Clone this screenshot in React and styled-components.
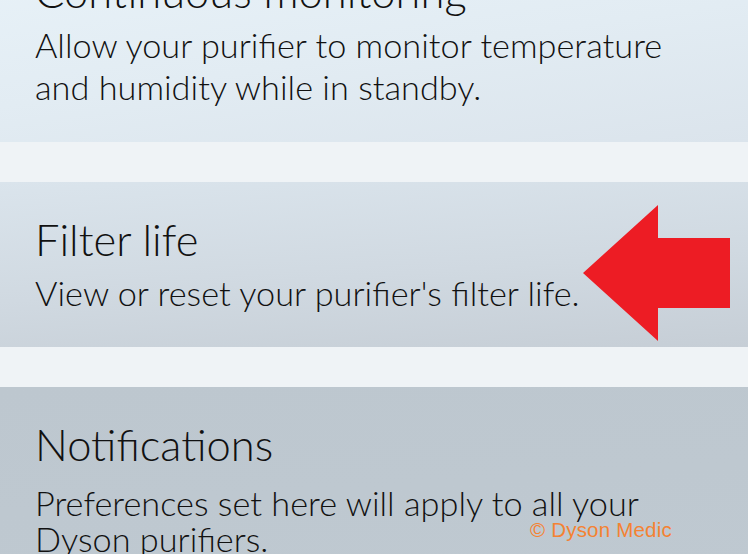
import React from "react";
import styled, { createGlobalStyle } from "styled-components";

const GlobalStyle = createGlobalStyle`
  html, body {
    margin: 0;
    height: 100%;
    overflow: hidden;
    background: #eff3f6;
  }
  body {
    font-family: "Lato", "Noto Sans", sans-serif;
    color: #111;
    -webkit-font-smoothing: antialiased;
  }
`;

const tones = {
  sky: "linear-gradient(172deg, #e9f3f9 0%, #e2ecf3 55%, #dbe4ec 100%)",
  mist: "linear-gradient(176deg, #dae4ec 0%, #d0d9e1 55%, #c6ced6 100%)",
  slate: "linear-gradient(176deg, #bdc7cf 0%, #bfc9d1 100%)",
};

const Screen = styled.main`
  position: relative;
  height: 100vh;
  overflow: hidden;
`;

/* settings list, scrolled so the first entry sits partly above the fold */
const SettingsList = styled.div`
  display: flex;
  flex-direction: column;
  gap: 40px;
  margin-top: -66px;
`;

const Card = styled.section`
  position: relative;
  display: flex;
  flex-direction: column;
  padding: 32px 35px ${(p) => p.$padBottom}px;
  background: ${(p) => tones[p.$tone]};
`;

const Title = styled.h2`
  margin: 0 0 ${(p) => p.$gap}px;
  font-size: 43.5px;
  line-height: 50px;
  font-weight: 300;
`;

const Desc = styled.p`
  margin: 0;
  font-size: 34.3px;
  line-height: ${(p) => p.$leading}px;
  font-weight: 300;
  max-width: 670px;
`;

const Pointer = styled.svg`
  position: absolute;
  left: 580px;
  top: 20px;
  width: 154px;
  height: 142px;
`;

const Watermark = styled.span`
  position: absolute;
  left: 530px;
  top: 518px;
  font-family: "Liberation Sans", Arial, sans-serif;
  font-size: 20.5px;
  line-height: 23px;
  letter-spacing: 0.2px;
  color: #f58232;
`;

function RedArrow() {
  return (
    <Pointer viewBox="580 203 154 142" aria-hidden="true">
      <polygon
        points="583,274 658,206 658,239 730,239 730,309 658,309 658,342"
        fill="#ed1c24"
      />
    </Pointer>
  );
}

export default function App() {
  return (
    <>
      <GlobalStyle />
      <Screen>
        <SettingsList>
          <Card $tone="sky" $padBottom={34}>
            <Title $gap={8}>Continuous monitoring</Title>
            <Desc $leading={42}>
              Allow your purifier to monitor temperature and humidity while in standby.
            </Desc>
          </Card>
          <Card $tone="mist" $padBottom={33}>
            <Title $gap={8}>Filter life</Title>
            <Desc $leading={42}>View or reset your purifier's filter life.</Desc>
            <RedArrow />
          </Card>
          <Card $tone="slate" $padBottom={33}>
            <Title $gap={16}>Notifications</Title>
            <Desc $leading={36}>
              Preferences set here will apply to all your Dyson purifiers.
            </Desc>
          </Card>
        </SettingsList>
        <Watermark>© Dyson Medic</Watermark>
      </Screen>
    </>
  );
}
